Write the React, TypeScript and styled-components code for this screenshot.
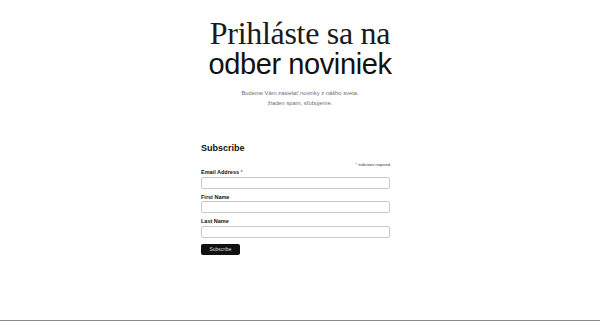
import React from 'react';
import styled, { createGlobalStyle } from 'styled-components';

const GlobalStyle = createGlobalStyle`
  html, body {
    margin: 0;
    padding: 0;
    background: #ffffff;
    font-family: "Liberation Sans", Arial, sans-serif;
    color: #111;
  }
`;

const Page = styled.div`
  height: 321px;
  box-sizing: border-box;
  border-bottom: 1px solid #8a8a8a;
  display: flex;
  flex-direction: column;
  align-items: center;
  padding-top: 18px;
  overflow: hidden;
`;

const Title = styled.h1`
  margin: 0;
  text-align: center;
  font-weight: 400;
  line-height: 31px;
`;

const SerifLine = styled.span`
  display: block;
  font-family: "Liberation Serif", "Times New Roman", serif;
  font-size: 32px;
  letter-spacing: -0.3px;
  color: #1a1a1a;
`;

const SansLine = styled.span`
  display: block;
  font-family: "Liberation Sans", Arial, sans-serif;
  font-size: 29px;
  letter-spacing: -0.4px;
`;

const Intro = styled.p`
  margin: 8px 0 0;
  font-size: 5.8px;
  line-height: 10px;
  color: #6e6e6e;
  text-align: center;
`;

const Form = styled.form`
  width: 189px;
  margin: 34px 9px 0 0;
  display: flex;
  flex-direction: column;
`;

const FormTitle = styled.h2`
  margin: 0;
  font-size: 9px;
  font-weight: 700;
  line-height: 12px;
`;

const Required = styled.div`
  margin-top: 8px;
  text-align: right;
  font-size: 4px;
  line-height: 6px;
  color: #333;
`;

const Field = styled.div<{ first?: boolean }>`
  display: flex;
  flex-direction: column;
  margin-top: ${(p) => (p.first ? '1px' : '5px')};
`;

const Label = styled.label`
  font-size: 5.5px;
  font-weight: 700;
  line-height: 7px;
  margin-bottom: 0.5px;
`;

const Star = styled.span`
  color: #c02b0a;
  font-weight: 400;
`;

const Input = styled.input`
  height: 12px;
  box-sizing: border-box;
  border: 1px solid #c9c9c9;
  border-radius: 2px;
  background: #fff;
  padding: 0 3px;
  outline: none;
`;

const Button = styled.button`
  margin-top: 6px;
  width: 39px;
  height: 11px;
  border: none;
  border-radius: 2px;
  background: #111;
  color: #ddd;
  font-family: "Liberation Sans", Arial, sans-serif;
  font-size: 5px;
  padding: 0;
  cursor: pointer;
`;

export default function App() {
  return (
    <>
      <GlobalStyle />
      <Page>
        <Title>
          <SerifLine>Prihláste sa na</SerifLine>
          <SansLine>odber noviniek</SansLine>
        </Title>
        <Intro>
          Budeme Vám zasielať novinky z nášho sveta.
          <br />
          žiaden spam, sľubujeme.
        </Intro>
        <Form onSubmit={(e) => e.preventDefault()}>
          <FormTitle>Subscribe</FormTitle>
          <Required>
            <Star>*</Star> indicates required
          </Required>
          <Field first>
            <Label>
              Email Address <Star>*</Star>
            </Label>
            <Input type="email" />
          </Field>
          <Field>
            <Label>First Name</Label>
            <Input type="text" />
          </Field>
          <Field>
            <Label>Last Name</Label>
            <Input type="text" />
          </Field>
          <Button type="submit">Subscribe</Button>
        </Form>
      </Page>
    </>
  );
}
